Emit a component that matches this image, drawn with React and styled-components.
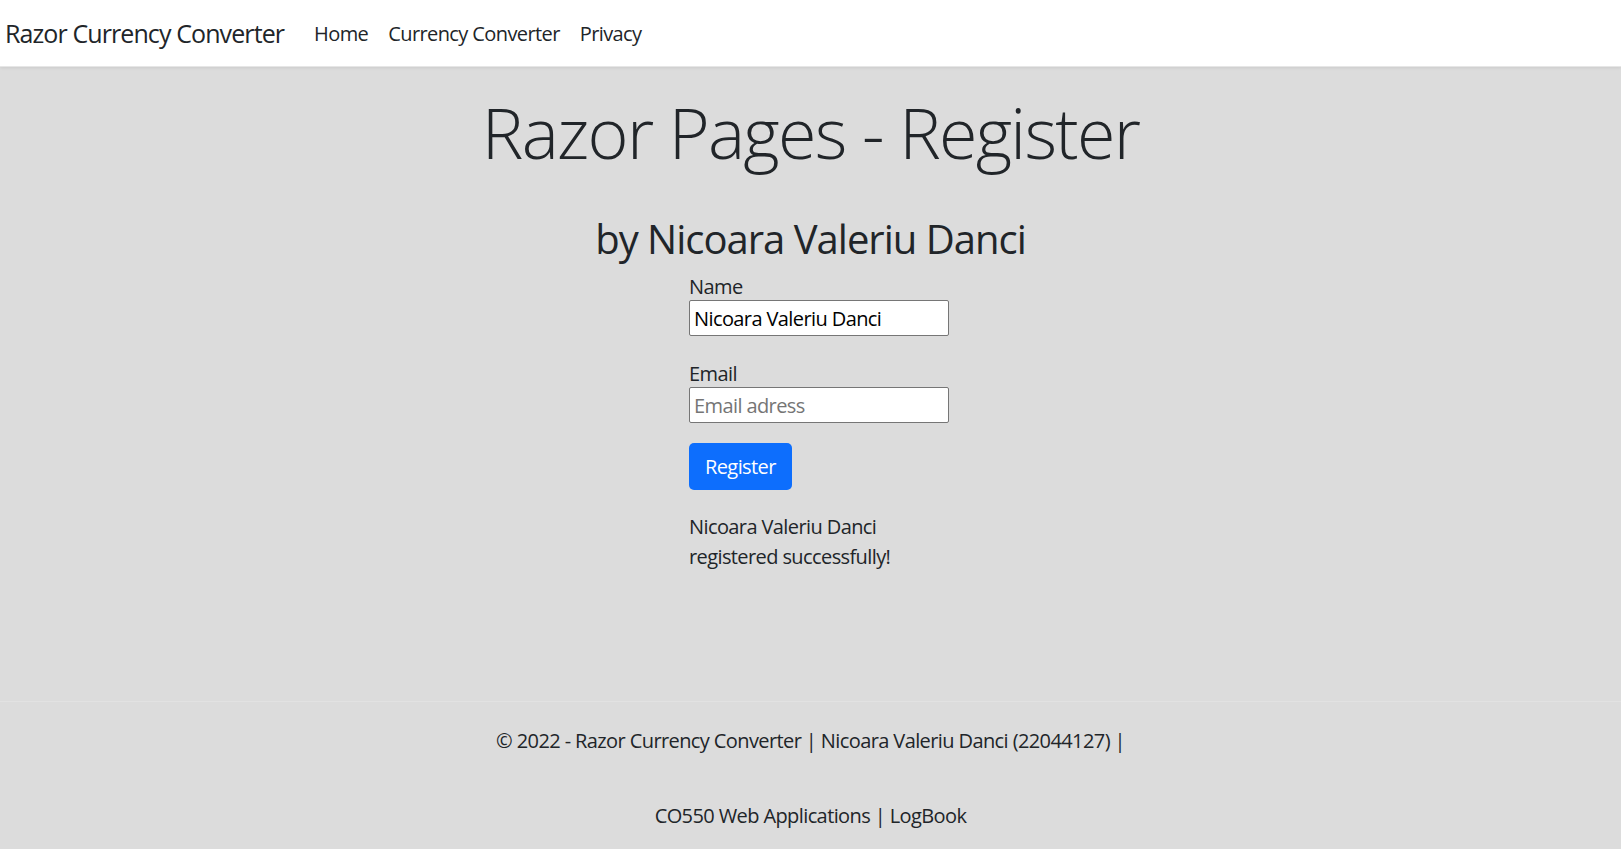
import React from "react";
import styled, { createGlobalStyle } from "styled-components";

const GlobalStyle = createGlobalStyle`
  * { box-sizing: border-box; }
  html, body {
    margin: 0;
    padding: 0;
    background: #dcdcdc;
    color: #212529;
    font-family: "Open Sans", "Noto Sans", sans-serif;
    font-size: 20px;
    letter-spacing: -0.03em;
  }
`;

const Page = styled.div`
  display: flex;
  flex-direction: column;
  min-height: 849px;
  overflow: hidden;
`;

const NavBar = styled.nav`
  height: 67px;
  background: #fff;
  display: flex;
  align-items: center;
  padding-left: 5px;
  box-shadow: 0 1px 3px rgba(0, 0, 0, 0.08);
  border-bottom: 1px solid #e6e6e6;
`;

const Brand = styled.a`
  font-size: 25px;
  letter-spacing: -0.036em;
  color: #212529;
  text-decoration: none;
  margin-right: 20px;
`;

const NavLinks = styled.ul`
  display: flex;
  list-style: none;
  margin: 0;
  padding: 0;
`;

const NavLink = styled.a`
  display: block;
  padding: 0 10px;
  font-size: 20px;
  color: #212529;
  text-decoration: none;
`;

const Main = styled.main`
  height: 634px;
  text-align: center;
  padding-top: 23px;
`;

const Title = styled.h1`
  margin: 0;
  font-size: 70px;
  font-weight: 300;
  line-height: 1.2;
  letter-spacing: -0.025em;
`;

const Subtitle = styled.h2`
  margin: 41px 0 0;
  font-size: 40px;
  font-weight: 400;
  line-height: 1.2;
  letter-spacing: -0.025em;
`;

const Form = styled.form`
  width: 243px;
  margin: 11px auto 0;
  text-align: left;
`;

const Field = styled.div`
  margin-bottom: ${(p) => p.$gap || 20}px;
`;

const Label = styled.label`
  display: block;
  font-size: 20px;
  line-height: 1.3;
`;

const Input = styled.input`
  display: block;
  width: 260px;
  height: 36px;
  padding: 0 4px;
  border: 1px solid #767676;
  border-radius: 2px;
  background: #fff;
  font-family: inherit;
  font-size: 20px;
  letter-spacing: -0.03em;
  color: #000;
  &::placeholder {
    color: #757575;
  }
`;

const Button = styled.button`
  height: 47px;
  padding: 0 16px;
  border: none;
  border-radius: 5px;
  background: #0d6efd;
  color: #fff;
  font-family: inherit;
  font-size: 20px;
  letter-spacing: -0.03em;
`;

const Message = styled.p`
  margin: 22px 0 0;
  font-size: 20px;
  line-height: 30px;
`;

const Footer = styled.footer`
  border-top: 1px solid #e2e2e2;
  padding-top: 1px;
  text-align: center;
  font-size: 20px;
  line-height: 75px;
`;

export default function App() {
  return (
    <Page>
      <GlobalStyle />
      <NavBar>
        <Brand href="#">Razor Currency Converter</Brand>
        <NavLinks>
          <li><NavLink href="#">Home</NavLink></li>
          <li><NavLink href="#">Currency Converter</NavLink></li>
          <li><NavLink href="#">Privacy</NavLink></li>
        </NavLinks>
      </NavBar>
      <Main>
        <Title>Razor Pages - Register</Title>
        <Subtitle>by Nicoara Valeriu Danci</Subtitle>
        <Form onSubmit={(e) => e.preventDefault()}>
          <Field $gap={25}>
            <Label>Name</Label>
            <Input defaultValue="Nicoara Valeriu Danci" />
          </Field>
          <Field>
            <Label>Email</Label>
            <Input placeholder="Email adress" />
          </Field>
          <Button type="submit">Register</Button>
          <Message>Nicoara Valeriu Danci registered successfully!</Message>
        </Form>
      </Main>
      <Footer>
        <div>© 2022 - Razor Currency Converter | Nicoara Valeriu Danci (22044127) |</div>
        <div>CO550 Web Applications | LogBook</div>
      </Footer>
    </Page>
  );
}
